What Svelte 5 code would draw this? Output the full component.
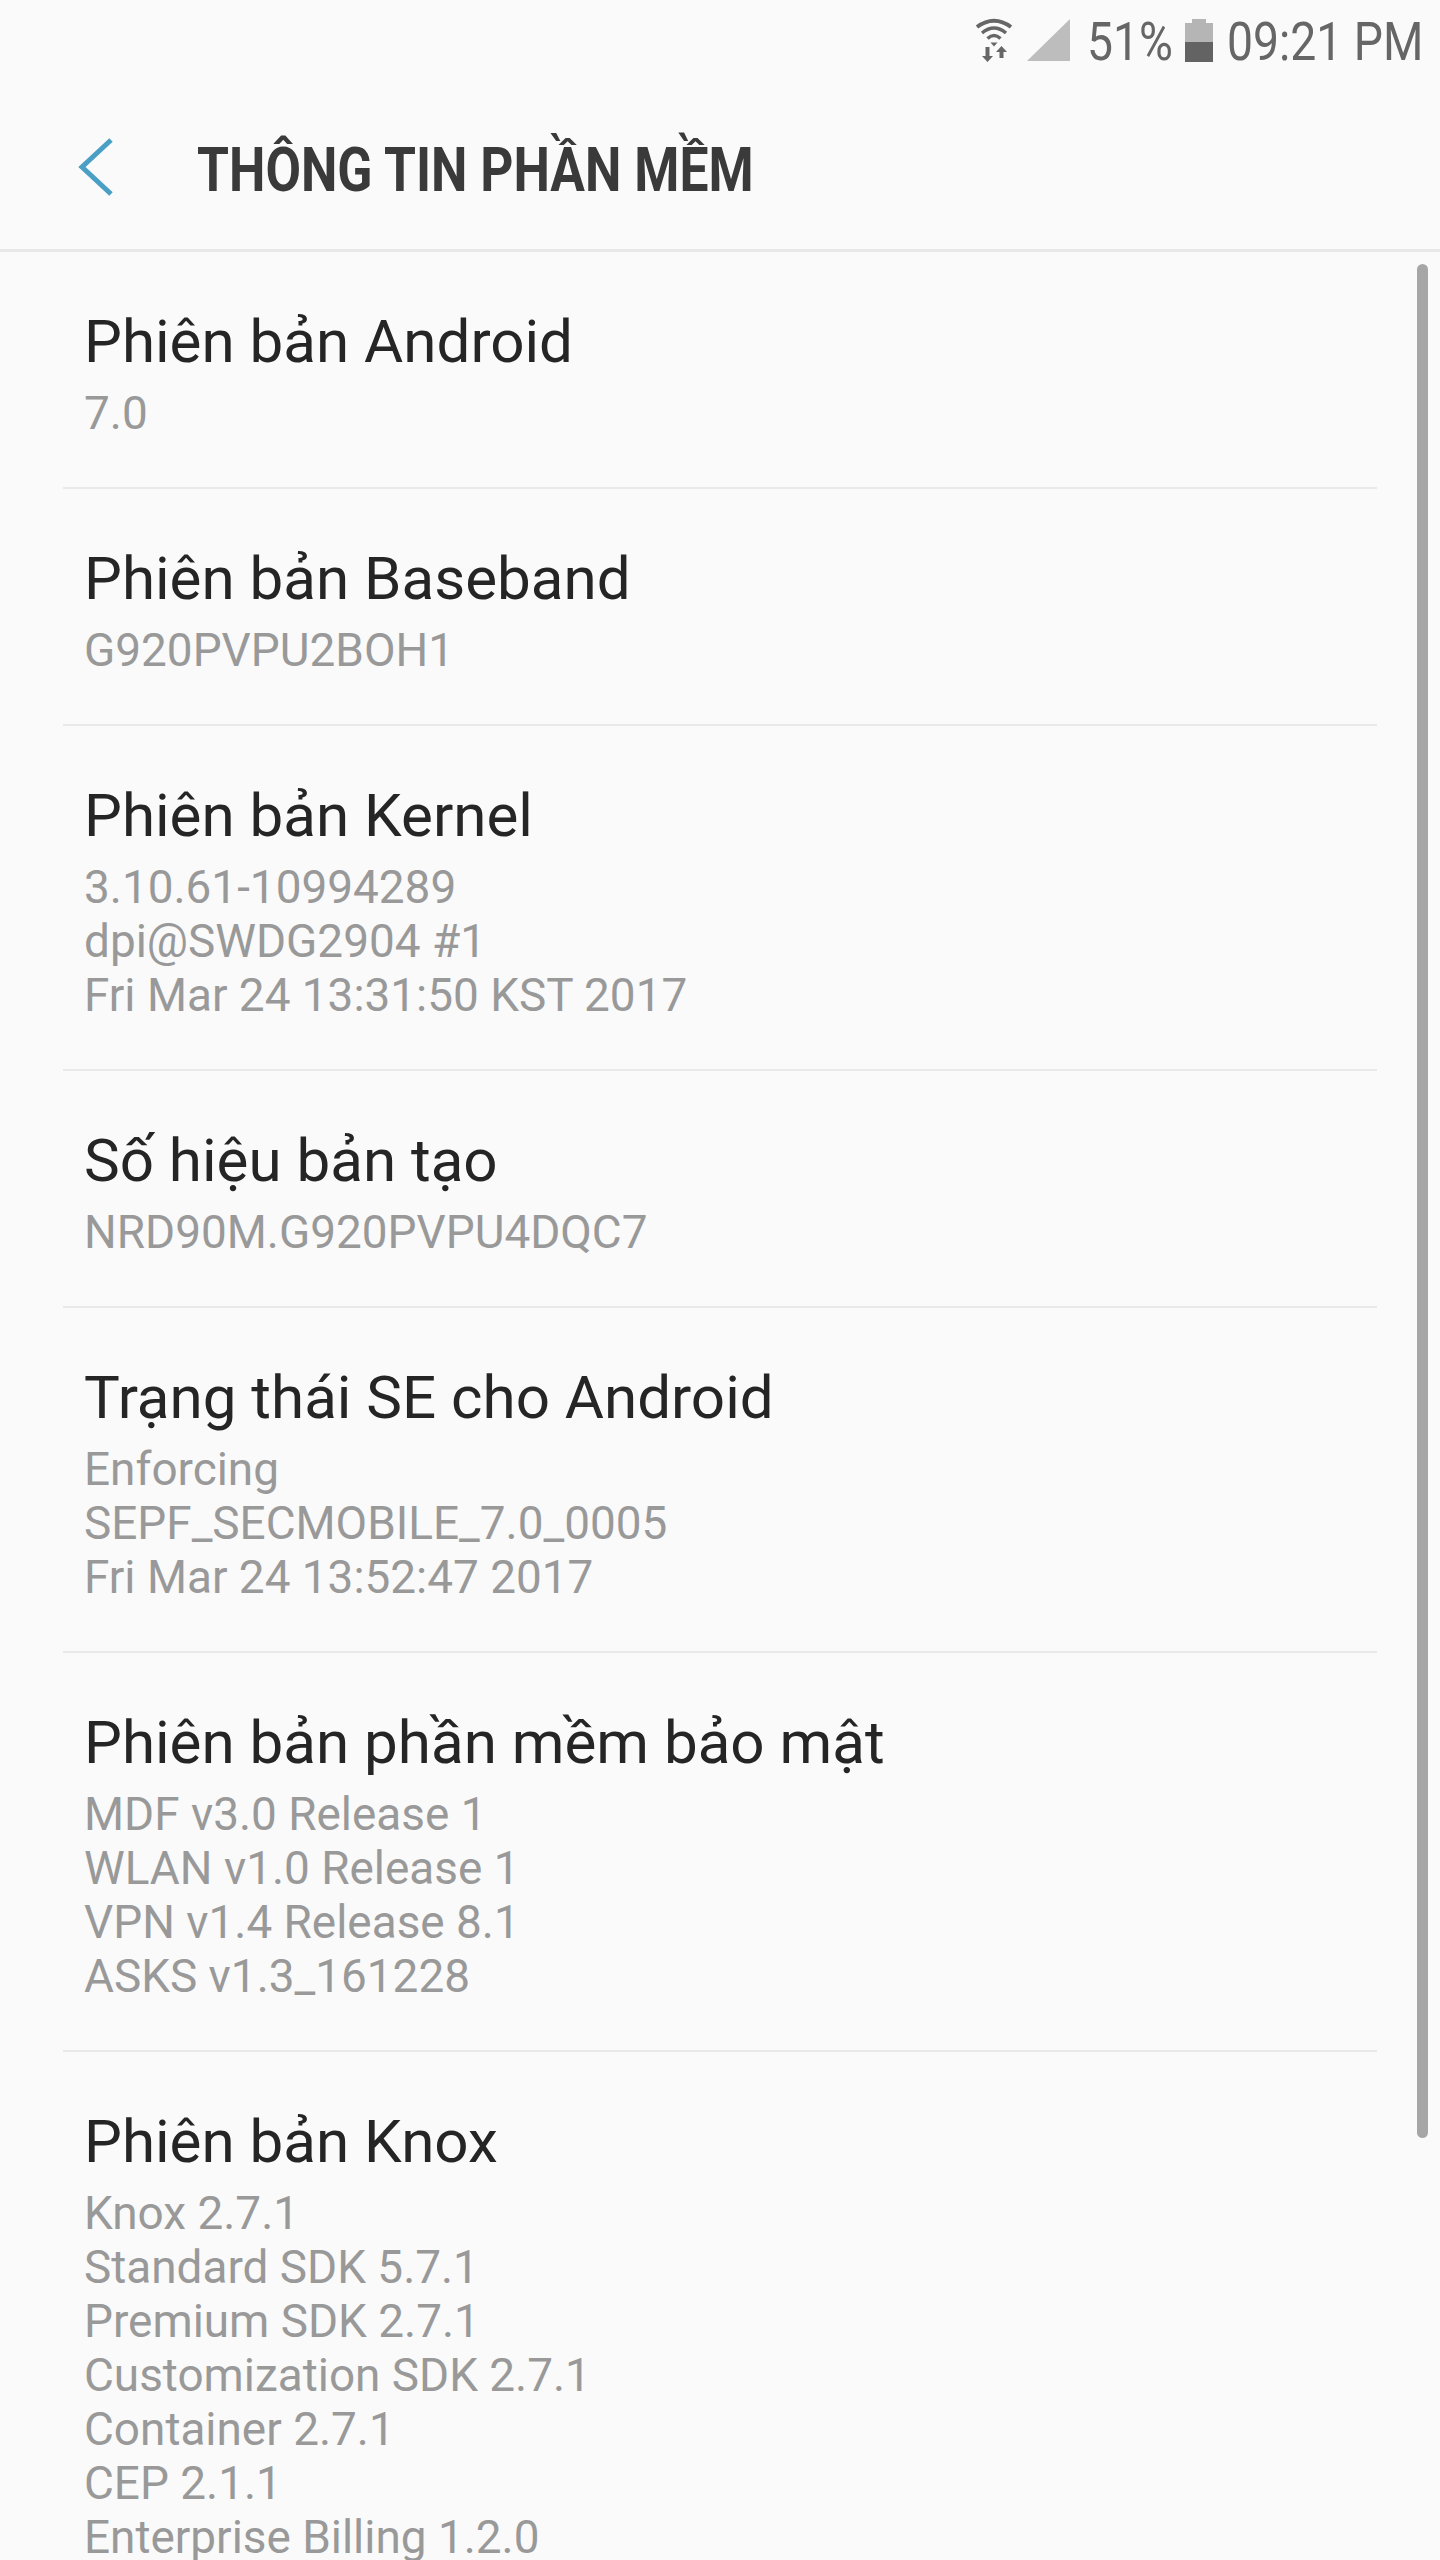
<script>
  const rows = [
    { title: 'Phiên bản Android', lines: ['7.0'] },
    { title: 'Phiên bản Baseband', lines: ['G920PVPU2BOH1'] },
    { title: 'Phiên bản Kernel', lines: ['3.10.61-10994289', 'dpi@SWDG2904 #1', 'Fri Mar 24 13:31:50 KST 2017'] },
    { title: 'Số hiệu bản tạo', lines: ['NRD90M.G920PVPU4DQC7'] },
    { title: 'Trạng thái SE cho Android', lines: ['Enforcing', 'SEPF_SECMOBILE_7.0_0005', 'Fri Mar 24 13:52:47 2017'] },
    { title: 'Phiên bản phần mềm bảo mật', lines: ['MDF v3.0 Release 1', 'WLAN v1.0 Release 1', 'VPN v1.4 Release 8.1', 'ASKS v1.3_161228'] },
    { title: 'Phiên bản Knox', lines: ['Knox 2.7.1', 'Standard SDK 5.7.1', 'Premium SDK 2.7.1', 'Customization SDK 2.7.1', 'Container 2.7.1', 'CEP 2.1.1', 'Enterprise Billing 1.2.0'] }
  ];
</script>

<div class="screen">
  <div class="status">
    <svg class="wifi" width="40" height="44" viewBox="0 0 40 44">
      <path d="M2 9 Q19 -3.500 36 9" fill="none" stroke="#666" stroke-width="4"/>
      <path d="M7 15 Q19 5 31 15" fill="none" stroke="#666" stroke-width="3.500"/>
      <path d="M12.500 20.500 Q19 14.500 25.500 20.500" fill="none" stroke="#666" stroke-width="3.500"/>
      <path d="M15.500 24.500 H22.500 L19 28.500 Z" fill="#666"/>
      <path d="M10.500 29 H14.500 V38 H18 L12.500 44 L7 38 H10.500 Z" fill="#666"/>
      <path d="M24.500 40 V34 H21 L26.500 28 L32 34 H28.500 V40 Z" fill="#666"/>
    </svg>
    <svg class="signal" width="44" height="44" viewBox="0 0 44 44">
      <path d="M0 43 L43 1 V43 Z" fill="#bdbdbd"/>
    </svg>
    <span class="pct">51%</span>
    <svg class="batt" width="28" height="44" viewBox="0 0 28 44">
      <path d="M7 1 H21 V5 H28 V44 H0 V5 H7 Z" fill="#b5b5b5"/>
      <rect x="0" y="24" width="28" height="20" fill="#636363"/>
    </svg>
    <span class="clock">09:21 PM</span>
  </div>

  <div class="header">
    <svg class="back" width="36" height="58" viewBox="0 0 36 58">
      <path d="M33 2 L4 29 L33 56" fill="none" stroke="#4a9fc4" stroke-width="5"/>
    </svg>
    <h1>THÔNG TIN PHẦN MỀM</h1>
  </div>

  <div class="list">
    {#each rows as row}
      <div class="row">
        <div class="title">{row.title}</div>
        {#each row.lines as line}
          <div class="sub">{line}</div>
        {/each}
      </div>
    {/each}
    <div class="scrollbar"></div>
  </div>
</div>

<style>
  :global(body) {
    margin: 0;
    background: #fafafa;
  }

  .screen {
    height: 2560px;
    overflow: hidden;
    background: #fafafa;
    font-family: Roboto, "Liberation Sans", sans-serif;
  }

  .status {
    height: 84px;
    box-sizing: border-box;
    padding: 18px 19px 0 0;
    display: flex;
    justify-content: flex-end;
    align-items: flex-start;
    color: #666;
    font-size: 54px;
    line-height: 44px;
  }

  .pct, .clock {
    display: block;
    white-space: nowrap;
    transform: scaleX(0.857);
    transform-origin: left center;
    margin-top: 2px;
  }

  .pct { width: 83px; }
  .clock { width: 194px; }

  .wifi { margin-right: 12px; }
  .signal { margin-right: 16px; }
  .batt { margin: 0 14px 0 15px; }

  .header {
    height: 165px;
    display: flex;
    align-items: center;
    border-bottom: 3px solid #e8e8e8;
    padding-left: 78px;
  }

  .back { margin-right: 83px; }

  h1 {
    margin: 6px 0 0;
    font-size: 62px;
    font-weight: 700;
    color: #3a3a3a;
    white-space: nowrap;
    transform: scaleX(0.832);
    transform-origin: left center;
  }

  .list {
    position: relative;
    padding: 0 63px;
  }

  .row {
    padding: 45px 21px 47px;
    border-bottom: 2px solid #e9e9e9;
  }

  .title {
    font-size: 60.100px;
    line-height: 89px;
    color: #252525;
  }

  .sub {
    font-size: 45.900px;
    line-height: 54px;
    color: #999;
  }

  .scrollbar {
    position: absolute;
    top: 12px;
    right: 12px;
    width: 11px;
    height: 1874px;
    border-radius: 6px;
    background: #a6a6a6;
  }
</style>
